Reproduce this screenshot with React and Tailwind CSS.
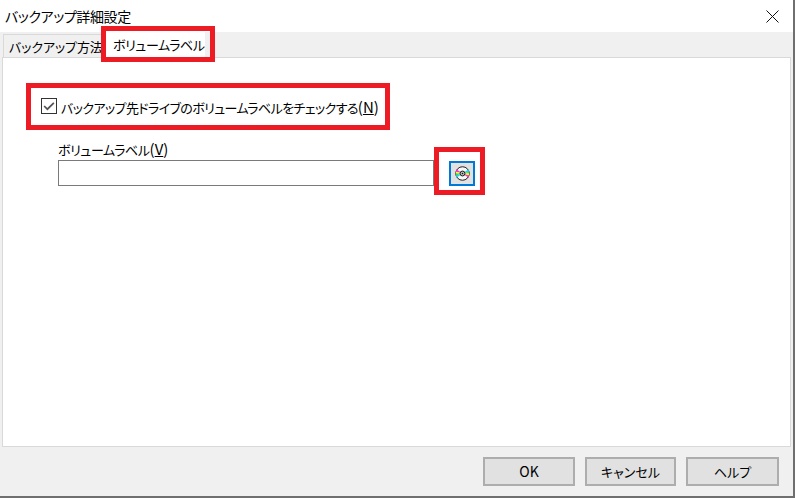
const font = { fontFamily: '"Noto Sans CJK JP", "Liberation Sans", sans-serif' };

const CdIcon = () => (
  <svg width="15" height="15" viewBox="0 0 16 16">
    <circle cx="8" cy="8" r="7.2" fill="#f8f8f8" stroke="#111" strokeWidth="1" />
    <path d="M8 8 L1.5 3.5 L1 6 Z" fill="#ff30d0" />
    <path d="M8 8 L1 6 L1 8 Z" fill="#ffff00" />
    <path d="M8 8 L1 8 L1 10 Z" fill="#30e040" />
    <path d="M8 8 L1 10 L1.5 12.5 Z" fill="#20d0ff" />
    <path d="M8 8 L14.5 3.5 L15 6 Z" fill="#20d0ff" />
    <path d="M8 8 L15 6 L15 8 Z" fill="#30e040" />
    <path d="M8 8 L15 8 L15 10 Z" fill="#ffff00" />
    <path d="M8 8 L15 10 L14.5 12.5 Z" fill="#ff30d0" />
    <circle cx="8" cy="8" r="2.6" fill="#b8b8b8" stroke="#111" strokeWidth="1" />
    <circle cx="8" cy="8" r="0.8" fill="#111" />
  </svg>
);

const Btn = ({ label, w, cls }) => (
  <button className={`h-[29px] ${w} ${cls} bg-[#e1e1e1] border-2 border-[#adadad] text-black flex items-center justify-center`}>
    {label}
  </button>
);

export default function App() {
  return (
    <div style={font} className="relative w-[795px] h-[498px] bg-white border-r-2 border-b-2 border-[#6f6f6f] flex flex-col overflow-hidden text-black [font-feature-settings:'palt']">
      {/* Title bar */}
      <div className="h-[32px] flex items-center justify-between pl-[5px] pr-[14px] shrink-0">
        <span className="text-[14px] tracking-[-0.4px] leading-none whitespace-nowrap">バックアップ詳細設定</span>
        <svg width="13" height="13" viewBox="0 0 13 13" stroke="#111" strokeWidth="1" className="mt-[1px]">
          <path d="M0.5 0.5 L12.5 12.5 M12.5 0.5 L0.5 12.5" />
        </svg>
      </div>

      {/* Tabs */}
      <div className="h-[25px] bg-[#f0f0f0] flex items-end pl-[3px] shrink-0">
        <div className="h-[23px] w-[99px] bg-[#f0f0f0] border-l border-r border-t border-[#d9d9d9] flex items-center pl-[5px] text-[13px] tracking-[-0.1px] leading-none whitespace-nowrap">
          バックアップ方法
        </div>
        <div className="h-[25px] w-[103px] bg-white flex items-center pl-[11px] text-[13px] tracking-[-0.4px] leading-none whitespace-nowrap">
          ボリュームラベル
        </div>
      </div>

      {/* Panel */}
      <div className="flex-1 bg-[#f0f0f0] px-[2px] flex flex-col">
        <div className="flex-1 bg-white border border-[#d9d9d9] pl-[38px] pt-[37px]">
          <div className="flex items-center gap-[4px] h-[22px]">
            <span className="w-[16px] h-[16px] border border-[#333] bg-white flex items-center justify-center">
              <svg width="14" height="14" viewBox="0 0 13 13" fill="none" stroke="#555" strokeWidth="1.6">
                <path d="M2 6.5 L5 9.5 L11 3.5" />
              </svg>
            </span>
            <span className="text-[13px] tracking-[-0.6px] leading-none whitespace-nowrap">
              バックアップ先ドライブのボリュームラベルをチェックする
              <span className="text-[15px] tracking-normal">(<span className="underline">N</span>)</span>
            </span>
          </div>
          <div className="ml-[17px] mt-[21px] text-[13px] tracking-[-0.4px] leading-[21px] whitespace-nowrap">
            ボリュームラベル
            <span className="text-[15px] tracking-normal">(<span className="underline">V</span>)</span>
          </div>
          <div className="ml-[17px] flex items-center gap-[15px]">
            <div className="w-[376px] h-[26px] border border-[#7a7a7a] bg-white"></div>
            <button className="w-[26px] h-[25px] bg-[#e1e1e1] border-2 border-[#0078d7] flex items-center justify-center">
              <CdIcon />
            </button>
          </div>
        </div>

        {/* Footer */}
        <div className="h-[49px] shrink-0 flex items-center justify-end gap-[10px] pr-[12px]">
          <Btn label="OK" w="w-[92px]" cls="text-[14px]" />
          <Btn label="キャンセル" w="w-[91px]" cls="text-[13px]" />
          <Btn label="ヘルプ" w="w-[93px]" cls="text-[13px]" />
        </div>
      </div>

      {/* Red annotation boxes */}
      <div className="absolute left-[101px] top-[26px] w-[114px] h-[36px] border-[5px] border-[#ed1c24]"></div>
      <div className="absolute left-[26px] top-[83px] w-[364px] h-[47px] border-[5px] border-[#ed1c24]"></div>
      <div className="absolute left-[434px] top-[147px] w-[51px] h-[48px] border-[5px] border-[#ed1c24]"></div>
    </div>
  );
}
